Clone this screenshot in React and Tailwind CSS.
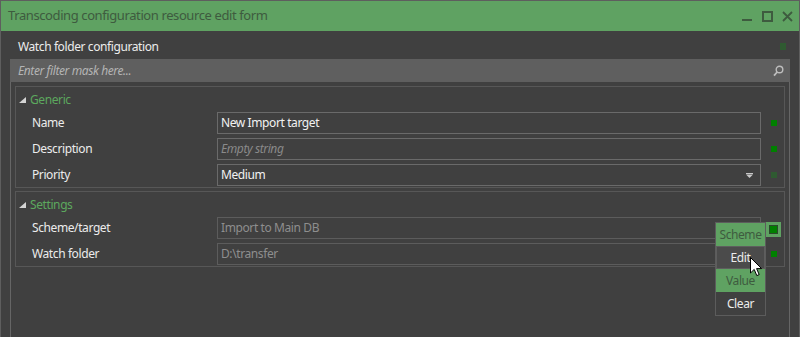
import React from 'react';

const font = { fontFamily: '"Noto Sans", "Open Sans", sans-serif' };

const Square = ({ dim }) => (
  <span className={`block w-[6px] h-[6px] ${dim ? 'bg-[#2f5a31]' : 'bg-[#008000]'}`} />
);

const Editor = ({ children, disabled, italic, dropdown }) => {
  let tone = 'border-[#6a6a6a] text-[#f2f2f2]';
  if (disabled) tone = 'border-[#5c5c5c] text-[#8e8e8e]';
  if (italic) tone = 'border-[#6a6a6a] text-[#8a8a8a] italic';
  return (
    <div className={`w-[544px] h-[22px] border flex items-center pl-[3px] pr-[6px] ${tone}`}>
      <span className="flex-1 truncate">{children}</span>
      {dropdown && (
        <svg width="7" height="5" viewBox="0 0 7 5" className="mr-[1px]">
          <rect x="0" y="0" width="7" height="1" fill="#c8c8c8" />
          <path d="M0 1.5 H7 L3.5 5 Z" fill="#c8c8c8" />
        </svg>
      )}
    </div>
  );
};

const Row = ({ label, children, square }) => (
  <div className="flex items-center h-[22px]">
    <div className="w-[201px] pl-[16px] text-[#ececec]">{label}</div>
    {children}
    <div className="w-[22px] flex justify-center pl-[3px]">{square}</div>
  </div>
);

const Group = ({ title, children }) => (
  <div className="border border-[#575757] pb-[1px]">
    <div className="h-[25px] flex items-center pl-[3px]">
      <svg width="8" height="7" viewBox="0 0 8 7" className="mr-[3px] mt-[1px]">
        <path d="M7 0 V6 H0 Z" fill="#d4d4d4" />
      </svg>
      <span className="text-[#5ca85e]">{title}</span>
    </div>
    <div className="flex flex-col gap-[4px]">{children}</div>
  </div>
);

const Cursor = () => (
  <svg width="13" height="20" viewBox="0 0 13 20" className="absolute left-[749px] top-[256px]">
    <path
      d="M0.5 0.5 V16 L4.2 12.4 L6.8 18.6 L9.2 17.6 L6.6 11.6 H11.6 Z"
      fill="#ffffff"
      stroke="#000000"
      strokeWidth="1"
    />
  </svg>
);

export default function App() {
  return (
    <div
      className="relative w-[800px] h-[337px] bg-[#404040] border border-[#5e5e5e] border-b-0 flex flex-col overflow-hidden text-[12px] tracking-[-0.4px]"
      style={font}
    >
      <div className="h-[30px] bg-[#5fa262] flex items-center pl-[7px] pr-[6px] shrink-0">
        <span className="flex-1 text-[13px] text-[#3e5b3f]">
          Transcoding configuration resource edit form
        </span>
        <div className="flex items-center gap-[9px]">
          <svg width="11" height="11" viewBox="0 0 11 11">
            <rect x="0" y="8" width="10" height="2" fill="#3e5b3f" />
          </svg>
          <svg width="11" height="11" viewBox="0 0 11 11">
            <rect x="1" y="1" width="9" height="9" fill="none" stroke="#3e5b3f" strokeWidth="2" />
          </svg>
          <svg width="11" height="11" viewBox="0 0 11 11">
            <path d="M1 1 L10 10 M10 1 L1 10" stroke="#3e5b3f" strokeWidth="1.8" />
          </svg>
        </div>
      </div>

      <div className="flex-1 flex flex-col px-[9px]">
        <div className="h-[28px] flex items-center pl-[8px] pr-[4px] shrink-0">
          <span className="flex-1 text-[#ececec] mt-[3px]">Watch folder configuration</span>
          <span className="block w-[6px] h-[7px] bg-[#2f5a31] mt-[2px]" />
        </div>

        <div className="h-[23px] bg-[#5f5f5f] flex items-center pl-[8px] pr-[6px] shrink-0">
          <span className="flex-1 italic text-[#b4b4b4]">Enter filter mask here...</span>
          <svg width="11" height="12" viewBox="0 0 11 12">
            <circle cx="6.5" cy="4.5" r="3.3" fill="none" stroke="#bdbdbd" strokeWidth="1.4" />
            <path d="M4.2 7 L1 10.6" stroke="#bdbdbd" strokeWidth="1.8" />
          </svg>
        </div>

        <div className="flex-1 border-l border-r border-[#666666] px-[4px] pt-[4px] flex flex-col gap-[3px]">
          <Group title="Generic">
            <Row label="Name" square={<Square />}>
              <Editor>New Import target</Editor>
            </Row>
            <Row label="Description" square={<Square />}>
              <Editor italic>Empty string</Editor>
            </Row>
            <Row label="Priority" square={<Square dim />}>
              <Editor dropdown>Medium</Editor>
            </Row>
          </Group>
          <Group title="Settings">
            <Row label="Scheme/target" square={<span className="block w-[6px] h-[6px]" />}>
              <Editor disabled>Import to Main DB</Editor>
            </Row>
            <Row label="Watch folder" square={<Square />}>
              <Editor disabled>D:\transfer</Editor>
            </Row>
          </Group>
        </div>
      </div>

      <div className="absolute left-[765px] top-[221px] w-[15px] h-[15px] bg-[#5fa262] flex items-center justify-center">
        <span className="block w-[9px] h-[9px] bg-[#008000] border border-[#2c4a2d]" />
      </div>

      <div className="absolute left-[714px] top-[221px] w-[51px] border border-[#5c5c5c] bg-[#404040] flex flex-col">
        <div className="h-[23px] bg-[#5fa262] text-[#3e5b3f] flex items-center justify-center">Scheme</div>
        <div className="h-[23px] bg-[#4b4b4b] border border-[#5e5e5e] text-[#ececec] flex items-center justify-center">Edit</div>
        <div className="h-[23px] bg-[#5fa262] text-[#3e5b3f] flex items-center justify-center">Value</div>
        <div className="h-[23px] text-[#ececec] flex items-center justify-center">Clear</div>
      </div>

      <Cursor />
    </div>
  );
}
